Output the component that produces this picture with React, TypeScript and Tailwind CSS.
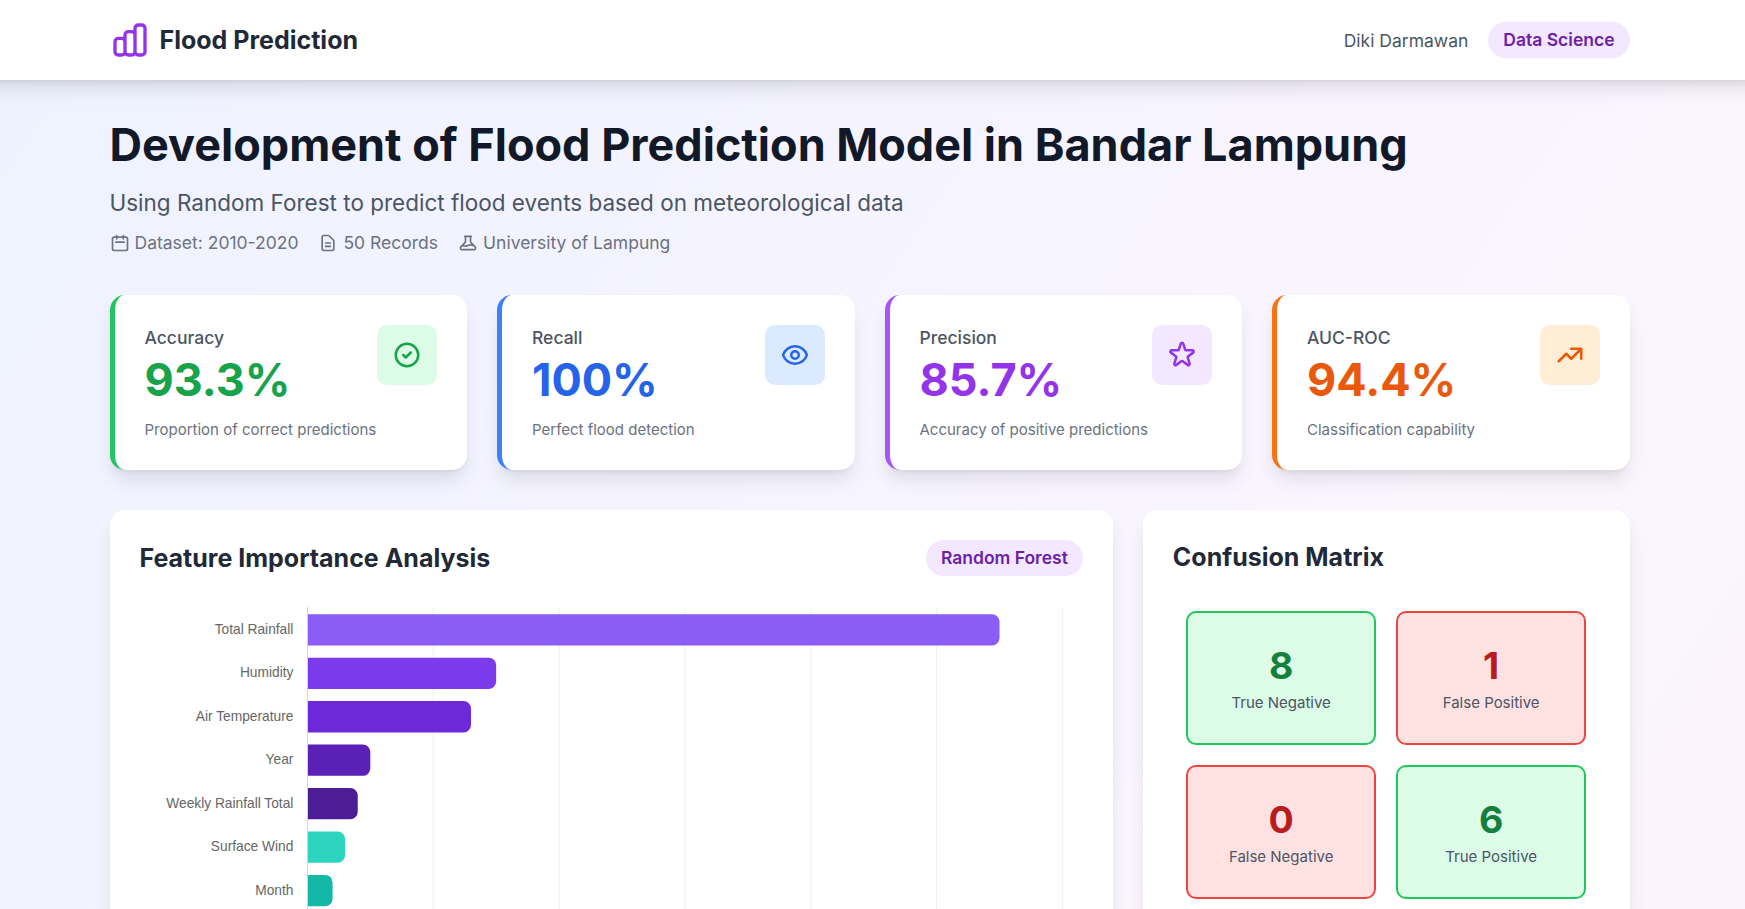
import React from "react";

const PATHS = {
  chart: ["M9 19v-6a2 2 0 00-2-2H5a2 2 0 00-2 2v6a2 2 0 002 2h2a2 2 0 002-2zm0 0V9a2 2 0 012-2h2a2 2 0 012 2v10m-6 0a2 2 0 002 2h2a2 2 0 002-2m0 0V5a2 2 0 012-2h2a2 2 0 012 2v14a2 2 0 01-2 2h-2a2 2 0 01-2-2z"],
  calendar: ["M8 7V3m8 4V3m-9 8h10M5 21h14a2 2 0 002-2V7a2 2 0 00-2-2H5a2 2 0 00-2 2v12a2 2 0 002 2z"],
  document: ["M9 12h6m-6 4h6m2 5H7a2 2 0 01-2-2V5a2 2 0 012-2h5.586a1 1 0 01.707.293l5.414 5.414a1 1 0 01.293.707V19a2 2 0 01-2 2z"],
  beaker: ["M19.428 15.428a2 2 0 00-1.022-.547l-2.387-.477a6 6 0 00-3.86.517l-.318.158a6 6 0 01-3.86.517L6.05 15.21a2 2 0 00-1.806.547M8 4h8l-1 1v5.172a2 2 0 00.586 1.414l5 5c1.26 1.26.367 3.414-1.415 3.414H4.828c-1.782 0-2.674-2.154-1.414-3.414l5-5A2 2 0 009 10.172V5L8 4z"],
  check: ["M9 12l2 2 4-4m6 2a9 9 0 11-18 0 9 9 0 0118 0z"],
  eye: ["M15 12a3 3 0 11-6 0 3 3 0 016 0z", "M2.458 12C3.732 7.943 7.523 5 12 5c4.478 0 8.268 2.943 9.542 7-1.274 4.057-5.064 7-9.542 7-4.477 0-8.268-2.943-9.542-7z"],
  star: ["M11.049 2.927c.3-.921 1.603-.921 1.902 0l1.519 4.674a1 1 0 00.95.69h4.915c.969 0 1.371 1.24.588 1.81l-3.976 2.888a1 1 0 00-.363 1.118l1.518 4.674c.3.922-.755 1.688-1.538 1.118l-3.976-2.888a1 1 0 00-1.176 0l-3.976 2.888c-.783.57-1.838-.197-1.538-1.118l1.518-4.674a1 1 0 00-.363-1.118l-3.976-2.888c-.784-.57-.38-1.81.588-1.81h4.914a1 1 0 00.951-.69l1.519-4.674z"],
  trend: ["M13 7h8m0 0v8m0-8l-8 8-4-4-6 6"],
};

function Icon({ name, className }: { name: keyof typeof PATHS; className: string }) {
  return (
    <svg className={className} viewBox="0 0 24 24" fill="none" stroke="currentColor" strokeWidth={2} strokeLinecap="round" strokeLinejoin="round">
      {PATHS[name].map((d) => (
        <path key={d} d={d} />
      ))}
    </svg>
  );
}

const metrics = [
  { label: "Accuracy", value: "93.3%", note: "Proportion of correct predictions", icon: "check", border: "border-[#22c55e]", text: "text-[#16a34a]", bg: "bg-[#dcfce7]" },
  { label: "Recall", value: "100%", note: "Perfect flood detection", icon: "eye", border: "border-[#3b82f6]", text: "text-[#2563eb]", bg: "bg-[#dbeafe]" },
  { label: "Precision", value: "85.7%", note: "Accuracy of positive predictions", icon: "star", border: "border-[#a855f7]", text: "text-[#9333ea]", bg: "bg-[#f3e8ff]" },
  { label: "AUC-ROC", value: "94.4%", note: "Classification capability", icon: "trend", border: "border-[#f97316]", text: "text-[#ea580c]", bg: "bg-[#ffedd5]" },
] as const;

const features = [
  { name: "Total Rainfall", value: 0.55, color: "#8b5cf6" },
  { name: "Humidity", value: 0.15, color: "#7c3aed" },
  { name: "Air Temperature", value: 0.13, color: "#6d28d9" },
  { name: "Year", value: 0.05, color: "#5b21b6" },
  { name: "Weekly Rainfall Total", value: 0.04, color: "#4c1d95" },
  { name: "Surface Wind", value: 0.03, color: "#2dd4bf" },
  { name: "Month", value: 0.02, color: "#14b8a6" },
];

const matrix = [
  { value: 8, label: "True Negative", good: true },
  { value: 1, label: "False Positive", good: false },
  { value: 0, label: "False Negative", good: false },
  { value: 6, label: "True Positive", good: true },
];

const AXIS = 167.4;
const UNIT = 1258.4;
const PITCH = 43.45;
const R = 7.5;

function FeatureChart() {
  return (
    <svg className="block h-[500px] w-[944px] overflow-visible" viewBox="0 0 944 500">
      {[1, 2, 3, 4, 5, 6].map((i) => (
        <rect key={i} x={AXIS - 0.6 + i * 125.84} y={1} width={1.25} height={500} fill="#000" fillOpacity={0.05} />
      ))}
      <rect x={AXIS - 0.4} y={0} width={1} height={500} fill="#000" fillOpacity={0.17} />
      {features.map((f, i) => {
        const w = f.value * UNIT;
        const top = 7.2 + i * PITCH;
        return (
          <g key={f.name}>
            <path
              d={`M${AXIS + 0.6} ${top}h${w - R - 0.6}a${R} ${R} 0 0 1 ${R} ${R}v${31.3 - 2 * R}a${R} ${R} 0 0 1 ${-R} ${R}h${R + 0.6 - w}z`}
              fill={f.color}
            />
            <text x={153.4} y={top + 19.7} textAnchor="end" fill="#666" className="font-['Liberation_Sans',Arial,sans-serif] text-[13.75px]">
              {f.name}
            </text>
          </g>
        );
      })}
    </svg>
  );
}

const cardShadow = "shadow-[0_12.5px_18.75px_-3.75px_rgba(0,0,0,0.1),0_5px_7.5px_-5px_rgba(0,0,0,0.1)]";

export default function App() {
  return (
    <div className="h-[909px] overflow-hidden bg-[linear-gradient(to_bottom_right,#eef2ff,#faf5ff_50%,#fdf2f8)] bg-[length:100%_2600px] bg-no-repeat font-['Inter',sans-serif]">
      <nav className="-mx-5 h-20 bg-white pl-5 shadow-[0_12.5px_18.75px_-3.75px_rgba(0,0,0,0.1),0_5px_7.5px_-5px_rgba(0,0,0,0.1)]">
        <div className="ml-[109.5px] flex h-20 w-[1520px] items-center justify-between">
          <div className="flex items-center">
            <Icon name="chart" className="size-10 text-[#9333ea]" />
            <span className="ml-2.5 text-[25px] leading-[35px] font-bold text-[#1f2937]">Flood Prediction</span>
          </div>
          <div className="flex items-center gap-5">
            <span className="text-[17.5px] leading-[25px] text-[#4b5563]">Diki Darmawan</span>
            <span className="h-9 rounded-full bg-[#f3e8ff] px-[15px] text-[17.5px] leading-9 font-semibold text-[#6b21a8]">Data Science</span>
          </div>
        </div>
      </nav>

      <main className="ml-[109.5px] w-[1520px] pt-10">
        <h1 className="text-[45px] leading-[50px] font-bold text-[#111827]">Development of Flood Prediction Model in Bandar Lampung</h1>
        <p className="mt-[15px] text-[22.5px] leading-[35px] text-[#4b5563]">Using Random Forest to predict flood events based on meteorological data</p>
        <div className="mt-[10px] flex gap-5 text-[17.5px] leading-[25px] text-[#6b7280]">
          <span className="flex items-center gap-[5px]"><Icon name="calendar" className="size-5" />Dataset: 2010-2020</span>
          <span className="flex items-center gap-[5px]"><Icon name="document" className="size-5" />50 Records</span>
          <span className="flex items-center gap-[5px]"><Icon name="beaker" className="size-5" />University of Lampung</span>
        </div>

        <section className="mt-10 grid grid-cols-4 gap-[30px]">
          {metrics.map((m) => (
            <div key={m.label} className={`h-[175px] rounded-[15px] border-l-[5px] bg-white p-[30px] ${m.border} ${cardShadow}`}>
              <div className="flex items-start justify-between">
                <div>
                  <p className="text-[17.5px] leading-[25px] font-medium text-[#4b5563]">{m.label}</p>
                  <p className={`mt-[5px] text-[45px] leading-[50px] font-bold ${m.text}`}>{m.value}</p>
                </div>
                <div className={`rounded-[10px] p-[15px] ${m.bg} ${m.text}`}>
                  <Icon name={m.icon} className="size-[30px]" />
                </div>
              </div>
              <p className="mt-[15px] text-[15px] leading-5 text-[#6b7280]">{m.note}</p>
            </div>
          ))}
        </section>

        <section className="mt-10 flex items-start gap-[30px]">
          <div className={`h-[620px] w-[1003.33px] shrink-0 rounded-[15px] bg-white p-[30px] ${cardShadow}`}>
            <div className="flex items-center justify-between">
              <h2 className="text-[25px] leading-[35px] font-bold text-[#1f2937]">Feature Importance Analysis</h2>
              <span className="h-9 rounded-full bg-[#f3e8ff] px-[15px] text-[17.5px] leading-9 font-semibold text-[#6b21a8]">Random Forest</span>
            </div>
            <div className="mt-[31px]">
              <FeatureChart />
            </div>
          </div>
          <div className={`h-[620px] flex-1 rounded-[15px] bg-white p-[30px] ${cardShadow}`}>
            <h2 className="text-[25px] leading-[35px] font-bold text-[#1f2937]">Confusion Matrix</h2>
            <div className="mx-auto mt-9 grid w-[400px] grid-cols-2 gap-5">
              {matrix.map((c) => (
                <div
                  key={c.label}
                  className={`flex h-[134px] flex-col items-center justify-center rounded-[10px] border-2 ${c.good ? "border-[#22c55e] bg-[#dcfce7]" : "border-[#ef4444] bg-[#fee2e2]"}`}
                >
                  <span className={`text-[37.5px] leading-[45px] font-bold ${c.good ? "text-[#15803d]" : "text-[#b91c1c]"}`}>{c.value}</span>
                  <span className="mt-[5px] text-[15px] leading-5 text-[#4b5563]">{c.label}</span>
                </div>
              ))}
            </div>
          </div>
        </section>
      </main>
    </div>
  );
}
